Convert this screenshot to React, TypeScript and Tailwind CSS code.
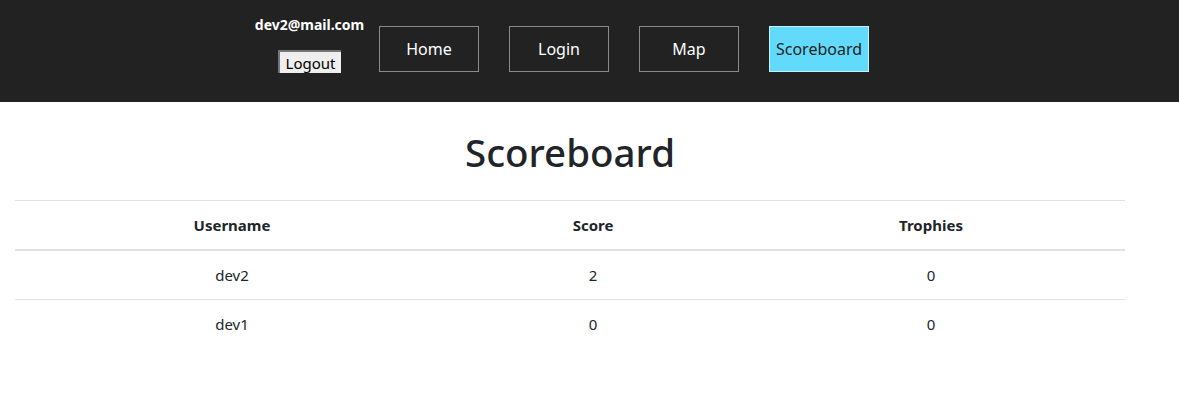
import React from "react";

const font = { fontFamily: '"Noto Sans", "Open Sans", sans-serif' };

export default function App() {
  const rows = [
    { u: "dev2", s: "2", t: "0" },
    { u: "dev1", s: "0", t: "0" },
  ];
  const cols = "grid grid-cols-[434px_288px_388px]";
  return (
    <div className="w-[1179px] h-[420px] bg-white text-[#212529]" style={font}>
      <header className="h-[102px] bg-[#222222] flex items-start pl-[255px]">
        <div className="w-[109px] flex flex-col items-center pt-[15px]">
          <div className="text-white font-bold text-[14px] leading-[20px] whitespace-nowrap">dev2@mail.com</div>
          <button className="mt-[15px] h-[23px] w-[63px] bg-[#efefef] text-black text-[15px] leading-[18px] border-t-2 border-l-2 border-[#767676] flex items-center justify-center">
            Logout
          </button>
        </div>
        <nav className="flex gap-[30px] ml-[15px] mt-[26px]">
          {["Home", "Login", "Map"].map((n) => (
            <div
              key={n}
              className="w-[100px] h-[46px] border border-[#8a8a8a] text-white text-[16px] flex items-center justify-center"
            >
              {n}
            </div>
          ))}
          <div className="w-[100px] h-[46px] border border-[#c9f1fd] bg-[#61dafb] text-[#222222] text-[16px] flex items-center justify-center">
            Scoreboard
          </div>
        </nav>
      </header>
      <h1 className="mt-[26px] mb-[24px] text-center text-[38.5px] leading-[48px] font-medium w-[1140px]">
        Scoreboard
      </h1>
      <div className="ml-[15px] w-[1110px] text-[15px]">
        <div className={`${cols} h-[51px] border-t border-b-2 border-[#dee2e6] font-bold items-center text-center`}>
          <div>Username</div>
          <div>Score</div>
          <div>Trophies</div>
        </div>
        {rows.map((r, i) => (
          <div
            key={r.u}
            className={`${cols} items-center text-center ${i === 0 ? "h-[49px] border-b border-[#dee2e6]" : "h-[48px]"}`}
          >
            <div>{r.u}</div>
            <div>{r.s}</div>
            <div>{r.t}</div>
          </div>
        ))}
      </div>
    </div>
  );
}
